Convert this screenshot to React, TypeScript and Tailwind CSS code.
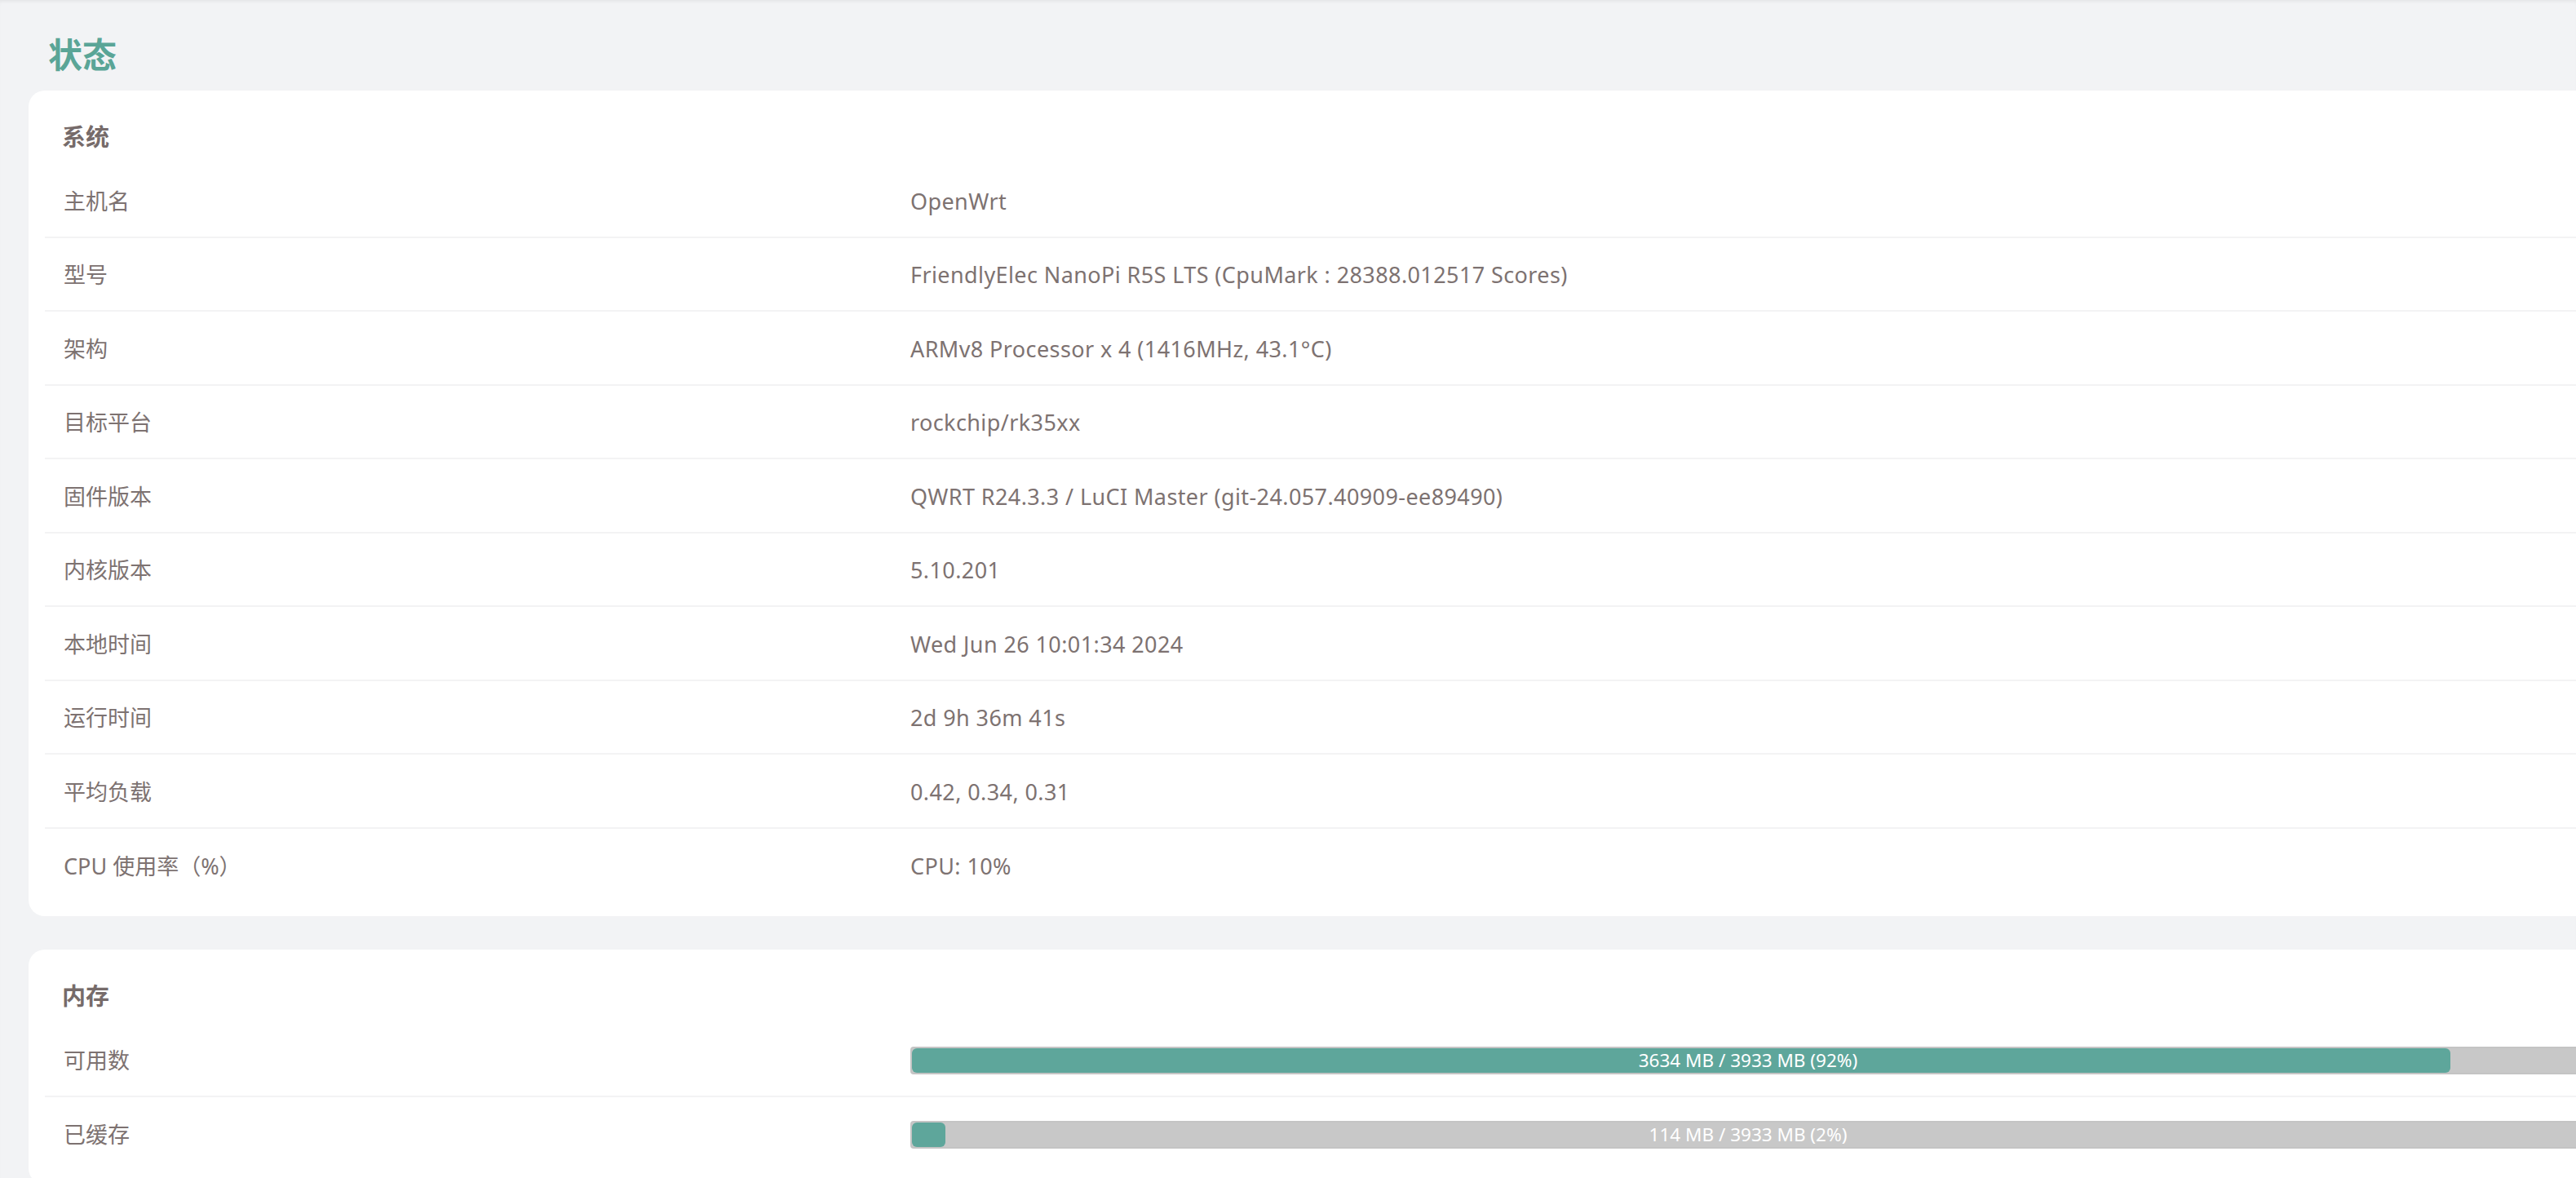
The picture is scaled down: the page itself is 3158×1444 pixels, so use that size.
import React from "react";

const font = "font-['Noto_Sans','Noto_Sans_CJK_SC',sans-serif]";

const systemRows: [string, string][] = [
  ["主机名", "OpenWrt"],
  ["型号", "FriendlyElec NanoPi R5S LTS (CpuMark : 28388.012517 Scores)"],
  ["架构", "ARMv8 Processor x 4 (1416MHz, 43.1°C)"],
  ["目标平台", "rockchip/rk35xx"],
  ["固件版本", "QWRT R24.3.3 / LuCI Master (git-24.057.40909-ee89490)"],
  ["内核版本", "5.10.201"],
  ["本地时间", "Wed Jun 26 10:01:34 2024"],
  ["运行时间", "2d 9h 36m 41s"],
  ["平均负载", "0.42, 0.34, 0.31"],
  ["CPU 使用率（%）", "CPU: 10%"],
];

function Row({
  label,
  children,
  last,
}: {
  label: string;
  children: React.ReactNode;
  last?: boolean;
}) {
  return (
    <div
      className={
        "flex h-[90.5px] items-center " +
        (last ? "" : "border-b-2 border-[#f3f3f4]")
      }
    >
      <div className="w-[1061px] shrink-0 pl-[23px] pt-[3px]">{label}</div>
      <div className="flex-1 pt-[3px] tracking-[0.4px]">{children}</div>
    </div>
  );
}

function Bar({ pct, text }: { pct: number; text: string }) {
  return (
    <div className="relative h-[34px] w-[2054px] rounded-[4px] border-2 border-[#c4c4c4] bg-[#c8c8c8] tracking-normal">
      <div
        className="h-full rounded-[6px] bg-[#5ea69b]"
        style={{ width: `${pct}%` }}
      />
      <div className="absolute inset-0 flex items-center justify-center text-[22.5px] leading-none text-white">
        {text}
      </div>
    </div>
  );
}

export default function App() {
  return (
    <div
      className={
        "h-[1444px] w-[3158px] overflow-hidden bg-[#f2f3f5] text-[27px] text-[#7d7271] shadow-[inset_0_4px_4px_-2px_rgba(0,0,0,0.06)] " +
        font
      }
    >
      <div className="pl-[59px] pt-[46px] text-[42px] font-bold leading-[42px] text-[#5aa597]">
        状态
      </div>

      <div className="ml-[35px] mt-[23px] w-[3300px] rounded-[20px] bg-white px-[20px] pb-[17px]">
        <div className="pl-[21px] pt-[37px] text-[29px] font-bold leading-[40px] text-[#766b6a]">
          系统
        </div>
        <div className="mt-[13px]">
          {systemRows.map(([l, v], i) => (
            <Row key={l} label={l} last={i === systemRows.length - 1}>
              {v}
            </Row>
          ))}
        </div>
      </div>

      <div className="ml-[35px] mt-[41px] w-[3300px] rounded-[20px] bg-white px-[20px] pb-[17px]">
        <div className="pl-[21px] pt-[37px] text-[29px] font-bold leading-[40px] text-[#766b6a]">
          内存
        </div>
        <div className="mt-[13px]">
          <Row label="可用数">
            <Bar pct={92} text="3634 MB / 3933 MB (92%)" />
          </Row>
          <Row label="已缓存" last>
            <Bar pct={2} text="114 MB / 3933 MB (2%)" />
          </Row>
        </div>
      </div>
    </div>
  );
}
